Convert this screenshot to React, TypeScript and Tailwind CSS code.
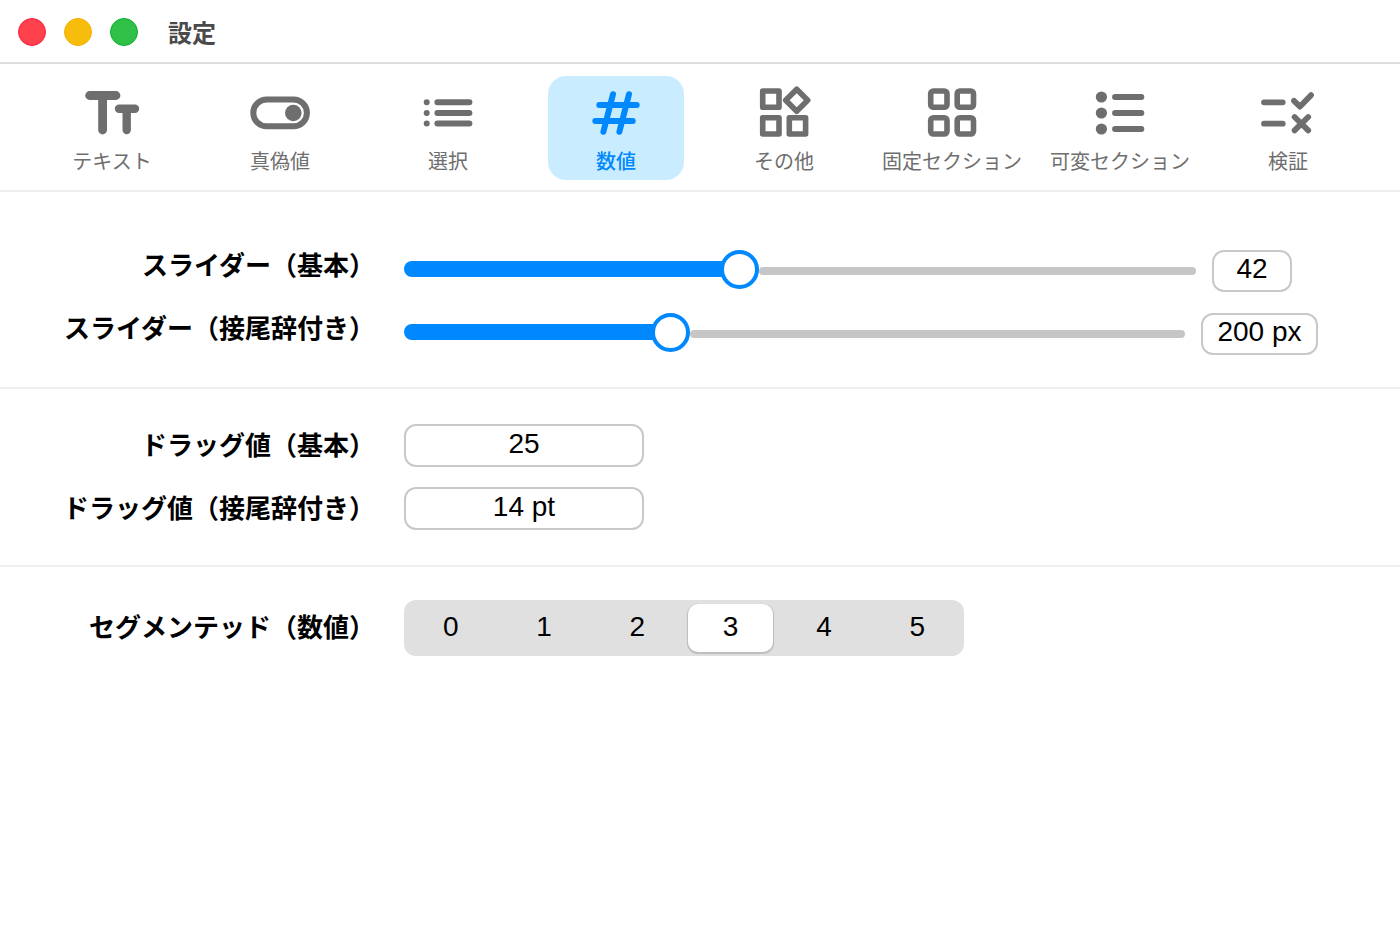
import React, { useState } from 'react'
import clsx from 'clsx'

const tabs = [
  {
    label: 'テキスト',
    icon: (
      <g strokeWidth="8.8">
        <path d="M9.6 15.5H36M22.6 15.5V50" />
        <path d="M39 28.8H55M46.7 28.8V50" strokeWidth="8.4" />
      </g>
    ),
  },
  {
    label: '真偽値',
    icon: (
      <g strokeWidth="6">
        <rect x="5.3" y="19.5" width="53.6" height="26.8" rx="13.4" />
        <circle cx="45.3" cy="33" r="8.3" fill="currentColor" stroke="none" />
      </g>
    ),
  },
  {
    label: '選択',
    icon: (
      <g strokeWidth="6">
        <path d="M10.7 22.3h.01M10.7 33h.01M10.7 43.6h.01" />
        <path d="M21.4 22.3H53.4M21.4 33H53.4M21.4 43.6H53.4" />
      </g>
    ),
  },
  {
    label: '数値',
    icon: <path strokeWidth="6" d="M15.3 25H52.7M11.3 41H48.7M29 14.2L19.4 51.8M45 14.2L35.4 51.8" />,
  },
  {
    label: 'その他',
    icon: (
      <g strokeWidth="5.6">
        <path d="M10.7 11h16.3v16.3h-16.3zM10.7 37.7h16.3v16.3h-16.3zM37.3 37.7h16.3v16.3h-16.3z" />
        <path d="M44.7 9.3l11 11-11 11-11-11z" />
      </g>
    ),
  },
  {
    label: '固定セクション',
    icon: (
      <g strokeWidth="5.6">
        <rect x="10.7" y="11" width="16.3" height="16.3" rx="2.7" />
        <rect x="37.2" y="11" width="16.3" height="16.3" rx="2.7" />
        <rect x="10.7" y="37.7" width="16.3" height="16.3" rx="2.7" />
        <rect x="37.2" y="37.7" width="16.3" height="16.3" rx="2.7" />
      </g>
    ),
  },
  {
    label: '可変セクション',
    icon: (
      <g strokeWidth="5.8">
        <path strokeWidth="11.2" d="M13.4 17h.01M13.4 33h.01M13.4 49h.01" />
        <path d="M27 17H53.4M27 33H53.4M27 49H53.4" />
      </g>
    ),
  },
  {
    label: '検証',
    icon: (
      <g strokeWidth="5.8">
        <path d="M8 22.3H26.7M8 43.7H26.7" />
        <path d="M38 20.8L44 26.6L55 15.2" />
        <path d="M38.6 37L52.2 50.4M52.2 37L38.6 50.4" />
      </g>
    ),
  },
]

const fieldStyle = 'rounded-xl border-2 border-[#c8c8c8] bg-white pb-1 text-center text-[28px] leading-8 outline-none'

function Section({ className, children }: { className: string; children: React.ReactNode }) {
  return <section className={clsx('flex flex-col', className)}>{children}</section>
}

type RowProps = { id: string; label: string; className?: string; children: React.ReactNode }

function Row({ id, label, className = 'items-center', children }: RowProps) {
  return (
    <div className={clsx('flex', className)}>
      <label htmlFor={id} className="w-[404px] shrink-0 pr-[29px] text-right text-[26px] font-bold leading-8 whitespace-nowrap">
        {label}
      </label>
      {children}
    </div>
  )
}

type SliderProps = {
  id: string
  initial: number
  min: number
  max: number
  suffix?: string
  fieldWidth: string
}

function Slider({ id, initial, min, max, suffix = '', fieldWidth }: SliderProps) {
  const [value, setValue] = useState(initial)
  const ratio = (value - min) / (max - min)

  return (
    <div className="flex min-w-0 flex-1 items-start gap-4">
      <div className="relative flex h-[38px] min-w-0 flex-1 items-center">
        <div className="-mr-5 h-4 rounded-l-full bg-[#0088ff]" style={{ flex: `${ratio} 1 20px` }} />
        <div className="w-[39px] shrink-0" />
        <div className="mt-1 h-2 rounded-full bg-[#c6c6c6]" style={{ flex: `${1 - ratio} 1 0px` }} />
        <input
          id={id}
          type="range"
          min={min}
          max={max}
          value={value}
          onChange={e => setValue(Number(e.target.value))}
          className="absolute inset-0 h-full w-full appearance-none bg-transparent outline-none [&::-webkit-slider-thumb]:size-[39px] [&::-webkit-slider-thumb]:appearance-none [&::-webkit-slider-thumb]:rounded-full [&::-webkit-slider-thumb]:border-4 [&::-webkit-slider-thumb]:border-[#0088ff] [&::-webkit-slider-thumb]:bg-white"
        />
      </div>
      <input
        type="text"
        aria-label="値"
        value={`${value}${suffix}`}
        onChange={e => setValue(parseInt(e.target.value) || min)}
        className={clsx(fieldStyle, 'h-[42px] shrink-0', fieldWidth)}
      />
    </div>
  )
}

function DragValue({ id, value }: { id: string; value: string }) {
  return <input id={id} type="text" defaultValue={value} className={clsx(fieldStyle, 'h-[43px] w-60 cursor-ew-resize')} />
}

function Segmented({ id }: { id: string }) {
  const [selected, setSelected] = useState(3)

  return (
    <div className="flex h-14 w-[560px] rounded-xl bg-[#e0e0e0]">
      {[0, 1, 2, 3, 4, 5].map(n => (
        <label key={n} className="relative flex flex-1 p-1">
          <input
            id={n === selected ? id : undefined}
            type="radio"
            name="segment"
            className="sr-only"
            checked={n === selected}
            onChange={() => setSelected(n)}
          />
          <span
            className={clsx(
              'flex flex-1 items-center justify-center rounded-[10px] pb-0.5 text-[28px] leading-8',
              n === selected && 'bg-white shadow-[0_1px_1px_1px_#bdbdbd]'
            )}
          >
            {n}
          </span>
        </label>
      ))}
    </div>
  )
}

export default function App() {
  const [active, setActive] = useState('数値')

  return (
    <div className="min-h-screen bg-white font-['Liberation_Sans','Noto_Sans_CJK_JP',sans-serif] text-black">
      <header className="flex h-16 items-center border-b-2 border-[#dedede] pt-0.5 pl-[18px]">
        <div className="flex gap-[18px]">
          <button aria-label="閉じる" className="size-7 rounded-full border border-[#ff1f38] bg-[#ff414e]" />
          <button aria-label="最小化" className="size-7 rounded-full border border-[#f5b000] bg-[#f7bd0c]" />
          <button aria-label="拡大" className="size-7 rounded-full border border-[#0bb02a] bg-[#30c048]" />
        </div>
        <h1 className="ml-[30px] pt-1 text-2xl font-bold text-[#4a4a4a]">設定</h1>
      </header>

      {/* タブ */}
      <nav className="flex border-b-2 border-[#efefef] px-7 pt-3 pb-[10px]">
        {tabs.map(tab => (
          <div key={tab.label} className="min-w-0 flex-1 px-4">
            <button
              onClick={() => setActive(tab.label)}
              className={clsx(
                'flex h-[104px] w-full flex-col items-center rounded-[18px] pt-1',
                tab.label === active ? 'bg-[#c9edff] text-[#0088ff]' : 'text-[#6e6e6e]'
              )}
            >
              <svg viewBox="0 0 64 64" className="size-16 shrink-0" fill="none" stroke="currentColor" strokeLinecap="round" strokeLinejoin="round">
                {tab.icon}
              </svg>
              <span className={clsx('text-xl leading-9 whitespace-nowrap', tab.label === active && 'font-medium')}>
                {tab.label}
              </span>
            </button>
          </div>
        ))}
      </nav>

      <main>
        <Section className="gap-[21px] border-b-2 border-[#efefef] pt-[58px] pb-8">
          <Row id="slider" label="スライダー（基本）" className="items-start pr-[108px]">
            <Slider id="slider" initial={42} min={0} max={100} fieldWidth="w-20" />
          </Row>
          <Row id="slider-suffix" label="スライダー（接尾辞付き）" className="items-start pr-[82px]">
            <Slider id="slider-suffix" initial={200} min={0} max={600} suffix=" px" fieldWidth="w-[117px]" />
          </Row>
        </Section>

        <Section className="gap-5 border-b-2 border-[#efefef] pt-[35px] pb-[35px]">
          <Row id="drag" label="ドラッグ値（基本）">
            <DragValue id="drag" value="25" />
          </Row>
          <Row id="drag-suffix" label="ドラッグ値（接尾辞付き）">
            <DragValue id="drag-suffix" value="14 pt" />
          </Row>
        </Section>

        <Section className="pt-[33px]">
          <Row id="segmented" label="セグメンテッド（数値）">
            <Segmented id="segmented" />
          </Row>
        </Section>
      </main>
    </div>
  )
}
